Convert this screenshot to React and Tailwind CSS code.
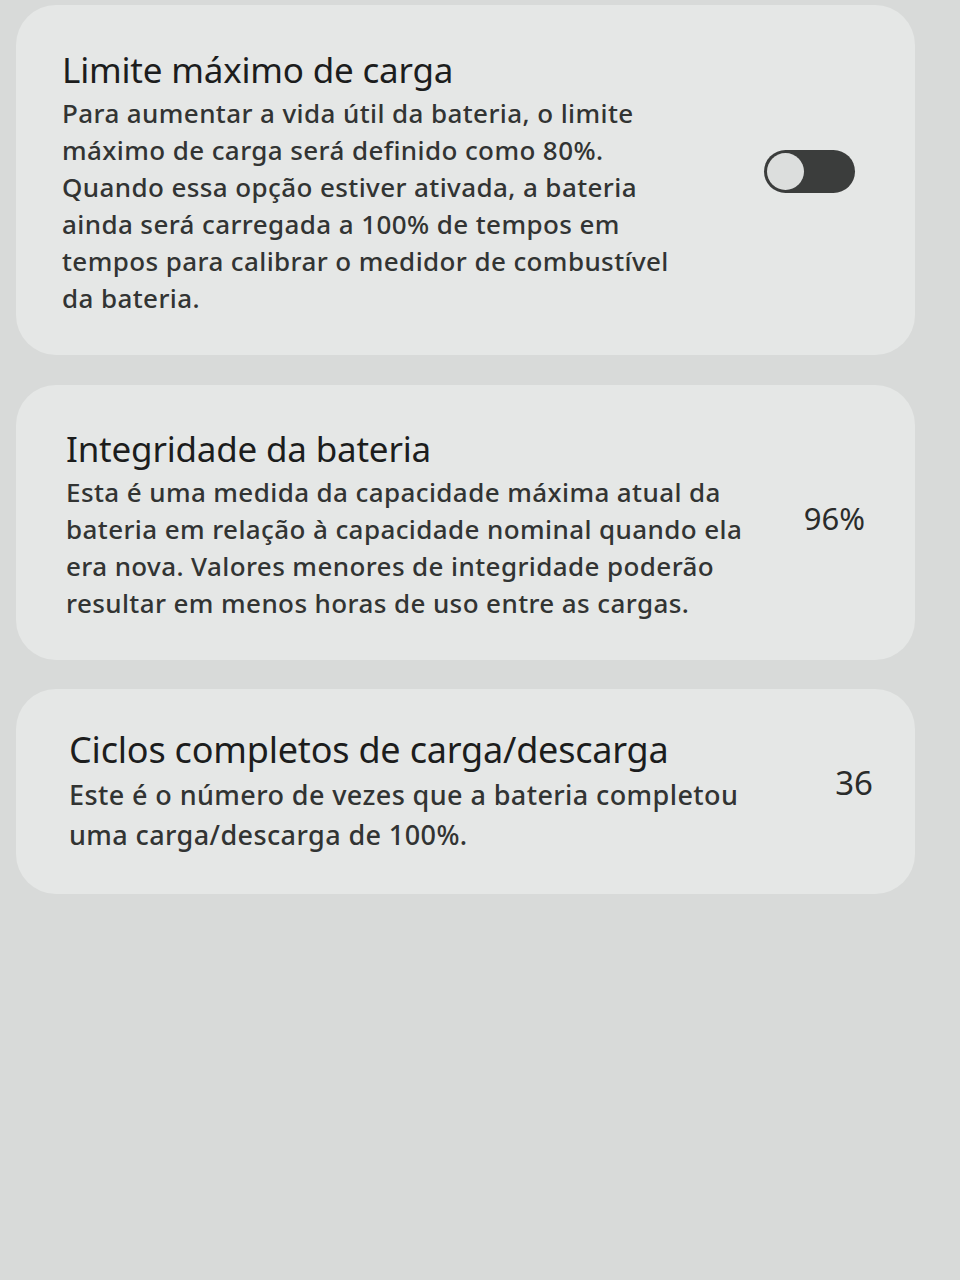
const Card = ({ title, lines, right, className, titleClass = 'text-[35px] leading-[42px]', bodyClass = 'text-[26px] leading-[37px]' }) => (
  <div className={`flex items-center justify-between rounded-[40px] bg-[#e5e7e6] ${className}`}>
    <div className="flex flex-col">
      <h2 className={`tracking-[-0.2px] text-[#1c1d1d] ${titleClass}`}>{title}</h2>
      <p className={`mt-[4px] font-medium tracking-[0.4px] text-[#323433] ${bodyClass}`}>
        {lines.map((l, i) => (
          <span key={i} className="block whitespace-nowrap">{l}</span>
        ))}
      </p>
    </div>
    {right}
  </div>
);

const Toggle = () => (
  <div className="mb-[24px] flex h-[43px] w-[91px] items-center rounded-full bg-[#3b3d3c] p-[3px]">
    <div className="h-[37px] w-[37px] rounded-full bg-[#dcdedd]" />
  </div>
);

export default function App() {
  return (
    <div className="min-h-[1280px] bg-[#d8dad9] pt-[5px] pl-[16px] font-['Noto_Sans',sans-serif]">
      <div className="flex w-[899px] flex-col gap-[30px]">
        <Card
          className="h-[350px] pl-[46px] pr-[60px] pt-[6px]"
          title="Limite máximo de carga"
          lines={[
            'Para aumentar a vida útil da bateria, o limite',
            'máximo de carga será definido como 80%.',
            'Quando essa opção estiver ativada, a bateria',
            'ainda será carregada a 100% de tempos em',
            'tempos para calibrar o medidor de combustível',
            'da bateria.',
          ]}
          right={<Toggle />}
        />
        <Card
          className="h-[275px] pl-[50px] pr-[50px] pt-[4px]"
          title="Integridade da bateria"
          lines={[
            'Esta é uma medida da capacidade máxima atual da',
            'bateria em relação à capacidade nominal quando ela',
            'era nova. Valores menores de integridade poderão',
            'resultar em menos horas de uso entre as cargas.',
          ]}
          right={<span className="mb-[12px] text-[31px] text-[#2a2c2b]">96%</span>}
        />
        <Card
          className="-mt-[1px] h-[205px] pl-[53px] pr-[42px]"
          titleClass="text-[36px] leading-[42px]"
          bodyClass="text-[27px] leading-[40px]"
          title="Ciclos completos de carga/descarga"
          lines={[
            'Este é o número de vezes que a bateria completou',
            'uma carga/descarga de 100%.',
          ]}
          right={<span className="mb-[18px] text-[33px] text-[#2a2c2b]">36</span>}
        />
      </div>
    </div>
  );
}
